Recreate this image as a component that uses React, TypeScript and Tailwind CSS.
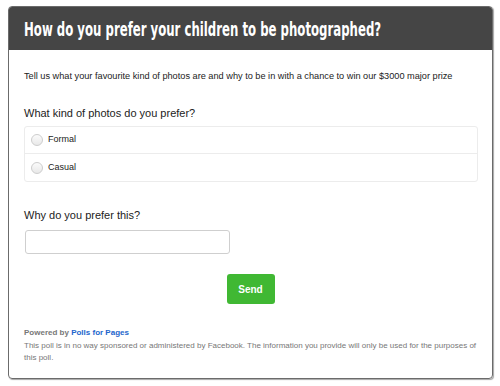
import React, { useState } from 'react';

const options = ['Formal', 'Casual'];

export default function App() {
  const [choice, setChoice] = useState<string | null>(null);
  const [reason, setReason] = useState('');

  return (
    <div className="w-[500px] h-[386px] bg-white pt-[6px] pl-[8px]" style={{ fontFamily: '"Liberation Sans", Arial, sans-serif' }}>
      <div className="w-[485px] h-[373px] rounded-[4px] border border-[#6b6b6b] shadow-[1px_1px_1px_rgba(0,0,0,0.35)] overflow-hidden flex flex-col">
        <header className="h-[43px] bg-[#454545] px-[15px] flex items-center">
          {/* condensed headline face isn't installed, so squeeze a bold sans horizontally */}
          <h1
            className="text-white text-[20px] font-bold leading-none whitespace-nowrap origin-left scale-x-[0.652]"
            style={{ fontFamily: '"DejaVu Sans Condensed", "DejaVu Sans", sans-serif' }}
          >
            How do you prefer your children to be photographed?
          </h1>
        </header>

        <div className="px-[15px] pt-[19px] flex-1 flex flex-col">
          <p className="text-[9.2px] text-[#222] leading-[14px] whitespace-nowrap">
            Tell us what your favourite kind of photos are and why to be in with a chance to win our $3000 major prize
          </p>

          <p className="mt-[23px] text-[11px] text-[#222] leading-[14px]">What kind of photos do you prefer?</p>

          <div className="mt-[6px] w-[454px] border border-[#ececec] rounded-[3px] divide-y divide-[#ececec]">
            {options.map(o => (
              <label key={o} className="h-[27px] flex items-center gap-[5px] pl-[6px] cursor-pointer" onClick={() => setChoice(o)}>
                <span
                  className={`w-[12px] h-[12px] rounded-full border border-[#cdcdcd] bg-gradient-to-b from-[#fbfbfb] to-[#e8e8e8] ${choice === o ? 'ring-2 ring-inset ring-[#3b82f6]' : ''}`}
                />
                <span className="text-[9px] text-[#222]">{o}</span>
              </label>
            ))}
          </div>

          <p className="mt-[26px] text-[11px] text-[#222] leading-[14px]">Why do you prefer this?</p>

          <input
            value={reason}
            onChange={e => setReason(e.target.value)}
            className="mt-[8px] ml-[1px] w-[205px] h-[24px] border border-[#cfcfcf] rounded-[3px] px-2 text-[11px] outline-none"
          />

          <div className="mt-[20px] flex justify-center">
            <button className="w-[48px] h-[30px] bg-[#40b833] text-white text-[10px] font-bold rounded-[3px]">
              Send
            </button>
          </div>

          <div className="mt-[23px] text-[8px] leading-[12px] text-[#777]">
            <p className="font-bold">
              Powered by <span className="text-[#2266cc]">Polls for Pages</span>
            </p>
            <p className="mt-[1px] -mr-[4px]">
              This poll is in no way sponsored or administered by Facebook. The information you provide will only be used for the purposes of this poll.
            </p>
          </div>
        </div>
      </div>
    </div>
  );
}
